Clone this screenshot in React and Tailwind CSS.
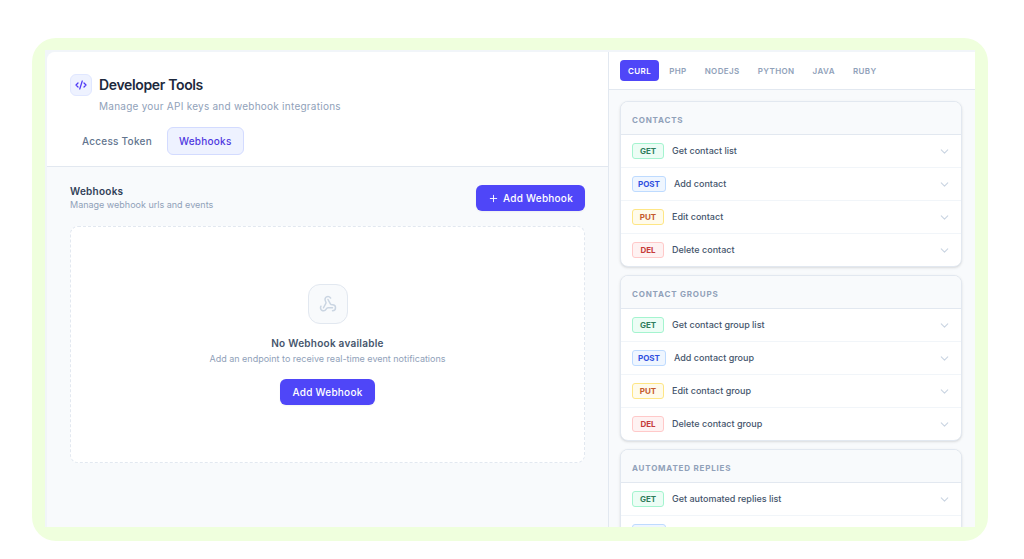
import { useState } from 'react';
import { ChevronDown, CodeXml, Plus, Webhook } from 'lucide-react';

const LANGUAGES = ['CURL', 'PHP', 'NODEJS', 'PYTHON', 'JAVA', 'RUBY'];

const METHOD_STYLES = {
    GET: 'border-emerald-200 bg-emerald-50 text-[#2f7d5b]',
    POST: 'border-blue-200 bg-blue-50 text-[#2f4fe0]',
    PUT: 'border-amber-200 bg-amber-50 text-[#c45a2c]',
    DEL: 'border-red-200 bg-red-50 text-[#c53a3a]',
};

const GROUPS = [
    {
        title: 'CONTACTS',
        endpoints: [
            ['GET', 'Get contact list'],
            ['POST', 'Add contact'],
            ['PUT', 'Edit contact'],
            ['DEL', 'Delete contact'],
        ],
    },
    {
        title: 'CONTACT GROUPS',
        endpoints: [
            ['GET', 'Get contact group list'],
            ['POST', 'Add contact group'],
            ['PUT', 'Edit contact group'],
            ['DEL', 'Delete contact group'],
        ],
    },
    {
        title: 'AUTOMATED REPLIES',
        endpoints: [
            ['GET', 'Get automated replies list'],
            ['POST', 'Add automated reply'],
        ],
    },
];

const PageTab = ({ label, active, onClick }) => (
    <button
        onClick={onClick}
        className={`h-7 rounded-md border px-[11px] text-[10px] font-medium tracking-wide ${active ? 'border-[#d3dbff] bg-indigo-50 text-[#4f39e0]' : 'border-transparent text-slate-500'}`}
    >
        {label}
    </button>
);

const PrimaryButton = ({ icon: Icon, children }) => (
    <button className="flex h-[26px] items-center gap-1 rounded-md bg-[#4f46f8] px-3 text-[10px] font-medium tracking-wide text-white shadow-xs">
        {Icon && <Icon size={11} />}
        {children}
    </button>
);

const EndpointRow = ({ method, label }) => (
    <button className="flex h-[33px] w-full items-center gap-2 border-t border-slate-100 pr-[10px] pl-[11px] text-left">
        <span className={`flex h-4 min-w-8 items-center justify-center rounded-[3px] border px-[5px] text-[8px] font-bold ${METHOD_STYLES[method]}`}>
            {method}
        </span>
        <span className="flex-1 text-[9px] font-medium text-slate-600">{label}</span>
        <ChevronDown size={13} className="text-slate-300" />
    </button>
);

const EndpointGroup = ({ title, endpoints }) => (
    <section className="shrink-0 overflow-hidden rounded-lg border border-slate-200 bg-white shadow-sm">
        <h3 className="flex h-8 items-center bg-slate-50 px-[11px] pt-[3px] text-[8px] font-bold tracking-widest text-slate-400">
            {title}
        </h3>
        <div className="border-t border-slate-200 [&>button:first-child]:h-8 [&>button:first-child]:border-t-0">
            {endpoints.map(([method, label]) => (
                <EndpointRow key={label} method={method} label={label} />
            ))}
        </div>
    </section>
);

export default function App() {
    const [tab, setTab] = useState('Webhooks');
    const [language, setLanguage] = useState('CURL');

    return (
        <div className="h-screen bg-white pt-[38px] pr-9 pb-[18px] pl-8 font-['Inter',sans-serif]">
            <div className="h-full rounded-3xl bg-[#efffdd] px-[13px] pt-3 pb-[14px]">
                <div className="flex h-full overflow-hidden bg-slate-100 pt-0.5 pl-0.5">
                    <main className="flex min-w-0 flex-[561] flex-col overflow-hidden rounded-tl-lg bg-slate-50">
                        <header className="border-b border-slate-200 bg-white px-[23px] pt-[22px] pb-[11px]">
                            <div className="flex gap-[7px]">
                                <div className="flex size-[22px] items-center justify-center rounded-md border border-indigo-100 bg-indigo-50 text-indigo-600">
                                    <CodeXml size={12} strokeWidth={2.5} />
                                </div>
                                <div>
                                    <h1 className="text-[14px] leading-[22px] font-semibold tracking-tight text-slate-800">Developer Tools</h1>
                                    <p className="text-[10px] leading-5 tracking-wide text-slate-400">Manage your API keys and webhook integrations</p>
                                </div>
                            </div>
                            <nav className="mt-[11px] flex gap-[3px]">
                                {['Access Token', 'Webhooks'].map((name) => (
                                    <PageTab key={name} label={name} active={tab === name} onClick={() => setTab(name)} />
                                ))}
                            </nav>
                        </header>

                        <div className="px-[23px] pt-[17px]">
                            <div className="flex items-center justify-between">
                                <div>
                                    <h2 className="text-[10px] leading-[14px] font-semibold tracking-wide text-slate-700">Webhooks</h2>
                                    <p className="text-[9px] leading-[14px] text-slate-400">Manage webhook urls and events</p>
                                </div>
                                <PrimaryButton icon={Plus}>Add Webhook</PrimaryButton>
                            </div>

                            <div className="mt-[14px] flex flex-col items-center rounded-lg border border-dashed border-slate-200 bg-white py-[57px]">
                                <div className="flex size-10 items-center justify-center rounded-xl border border-slate-200 bg-slate-50 text-slate-300">
                                    <Webhook size={18} />
                                </div>
                                <h3 className="mt-[11px] text-[10px] leading-4 font-semibold tracking-wide text-slate-600">No Webhook available</h3>
                                <p className="mb-3 text-[9px] leading-4 text-slate-400">Add an endpoint to receive real-time event notifications</p>
                                <PrimaryButton>Add Webhook</PrimaryButton>
                            </div>
                        </div>
                    </main>

                    <aside className="flex min-w-0 flex-[366] flex-col border-l border-slate-200 bg-slate-50">
                        <nav className="flex h-[38px] shrink-0 items-center gap-0.5 border-b border-slate-200 bg-white px-[11px]">
                            {LANGUAGES.map((name) => (
                                <button
                                    key={name}
                                    onClick={() => setLanguage(name)}
                                    className={`h-[21px] rounded px-2 text-[8px] font-semibold tracking-wider ${language === name ? 'bg-[#4f46f8] text-white' : 'text-slate-400'}`}
                                >
                                    {name}
                                </button>
                            ))}
                        </nav>
                        <div className="flex min-h-0 flex-1 flex-col gap-2 overflow-y-auto pt-[11px] pr-[13px] pl-[11px] [scrollbar-width:none]">
                            {GROUPS.map((group) => (
                                <EndpointGroup key={group.title} {...group} />
                            ))}
                        </div>
                    </aside>
                </div>
            </div>
        </div>
    );
}
